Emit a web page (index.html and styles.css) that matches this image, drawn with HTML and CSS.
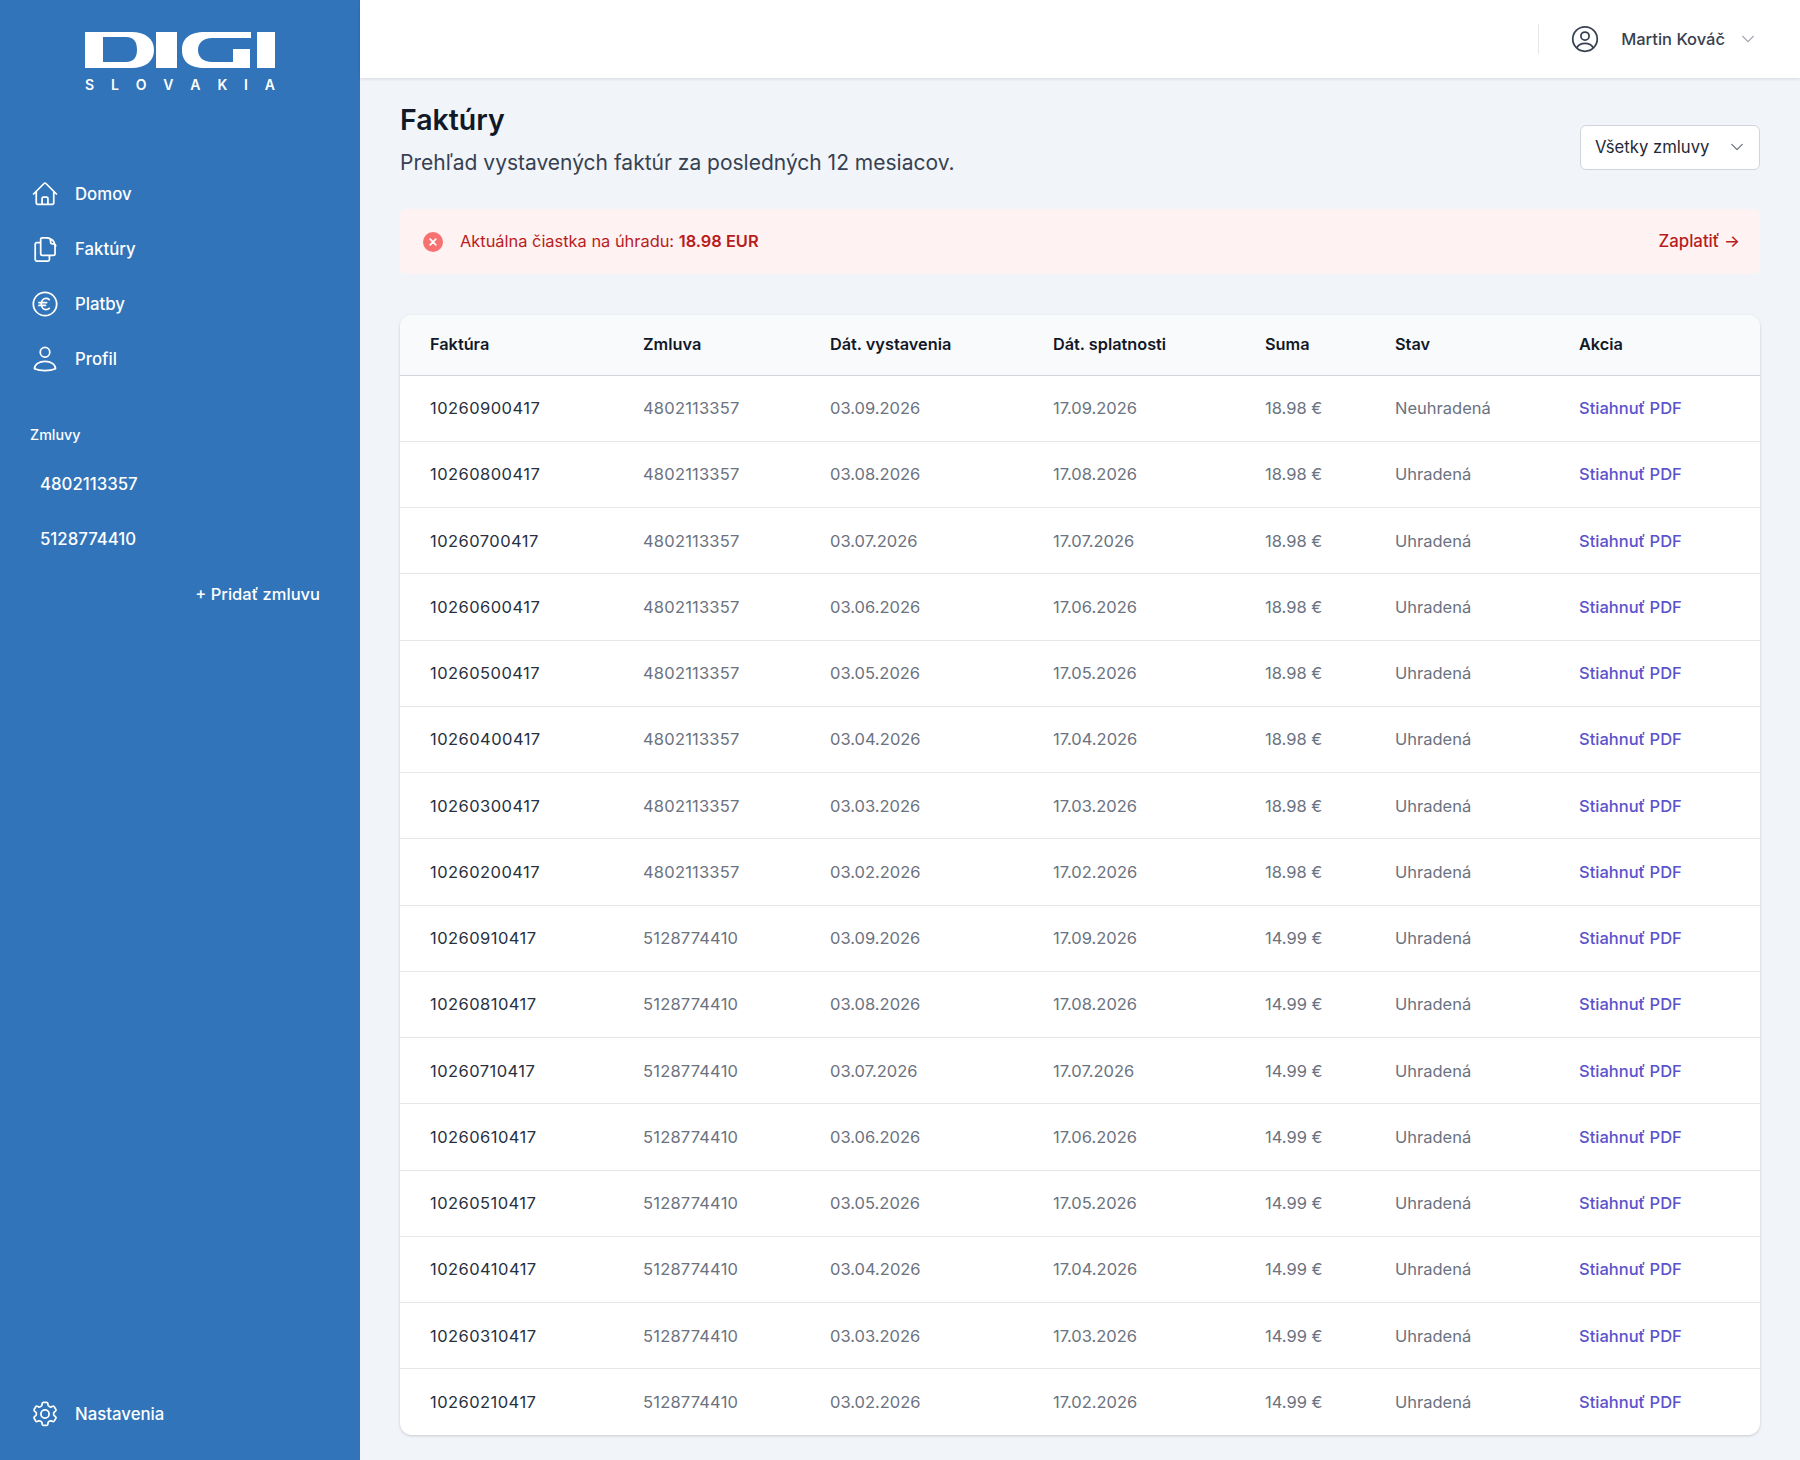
FILE: index.html
```html
<!DOCTYPE html>
<html lang="sk">
<head>
  <meta charset="UTF-8" />
  <title>Faktúry</title>
  <link rel="stylesheet" href="styles.css">
</head>
<body>
  <div class="layout">
    <!-- Sidebar -->
    <aside class="sidebar">
      <div class="logo">
        <svg class="logo-mark" viewBox="0 0 190 36" width="190" height="36" role="img" aria-label="DIGI">
          <path fill-rule="evenodd" d="M0 0H46C61 0 69 7 69 18C69 29 61 36 46 36H0ZM18 5V30H41C49 30 52 25 52 18C52 10 49 5 41 5Z" fill="#fff"/>
          <rect x="71" y="0" width="21" height="36" fill="#fff"/>
          <path d="M120 0H166V6H127C118 6 113 11 113 18C113 25 118 30 127 30H148V17H165V36H120C104 36 97 29 97 18C97 7 104 0 120 0Z" fill="#fff"/>
          <rect x="172" y="0" width="18" height="36" fill="#fff"/>
        </svg>
        <div class="logo-sub"><span>S</span><span>L</span><span>O</span><span>V</span><span>A</span><span>K</span><span>I</span><span>A</span></div>
      </div>

      <nav class="nav">
        <a class="nav-item" href="#">
          <svg class="nav-icon" viewBox="0 0 24 24"><path d="M2.2 12 11.200 3a1.100 1.100 0 0 1 1.600 0l9 9M4.500 9.800v9.900a1.100 1.100 0 0 0 1.100 1.100h12.800a1.100 1.100 0 0 0 1.100-1.100V9.800M9.500 20.800v-5.100c0-.6.500-1.100 1.100-1.100h2.800c.6 0 1.100.5 1.100 1.100v5.100"/></svg>
          Domov
        </a>
        <a class="nav-item" href="#">
          <svg class="nav-icon" viewBox="0 0 24 24"><path d="M8.300 6.600H4.900c-.7 0-1.300.6-1.300 1.300v13.200c0 .7.600 1.300 1.300 1.300h9.600c.7 0 1.300-.6 1.300-1.300v-3.700M8.300 3.400v12.700c0 .7.600 1.300 1.300 1.300h9.700c.7 0 1.300-.6 1.300-1.300V9.400c0-3.900-3.200-7-7-7H9.600c-.7 0-1.300.5-1.300 1ZM14 2.400c1.800 0 2.800 1.200 2.800 2.800v1c0 .7.600 1.300 1.300 1.300h.9c1.200 0 2.100 1 2.100 2"/></svg>
          Faktúry
        </a>
        <a class="nav-item" href="#">
          <svg class="nav-icon" viewBox="0 0 24 24"><circle cx="12" cy="12" r="10"/><path d="M15.600 8.200a4.100 4.100 0 0 0-2.700-1c-2.400 0-4.100 2.100-4.100 4.800s1.700 4.800 4.100 4.800c1 0 2-.4 2.700-1M6.800 10.800h6.600M6.800 13.200h5.600"/></svg>
          Platby
        </a>
        <a class="nav-item" href="#">
          <svg class="nav-icon" viewBox="0 0 24 24"><circle cx="12" cy="6.200" r="4.100"/><path d="M3 20.400c0-3.800 4-6.400 9-6.400s9 2.600 9 6.400c-2.500 1.100-5.600 1.600-9 1.600s-6.500-.5-9-1.600Z"/></svg>
          Profil
        </a>
      </nav>

      <div class="contracts-title">Zmluvy</div>
      <a class="contract" href="#">4802113357</a>
      <a class="contract" href="#">5128774410</a>
      <a class="add-contract" href="#">+ Pridať zmluvu</a>

      <a class="nav-item settings" href="#">
        <svg class="nav-icon" viewBox="0 0 24 24"><path d="M9.600 2.900c.1-.5.600-.9 1.100-.9h2.600c.5 0 1 .4 1.100.9l.2 1.500c.1.400.4.800.8 1l.7.4c.4.200.8.300 1.200.1l1.400-.5c.5-.2 1.100 0 1.300.5l1.300 2.200c.3.500.1 1-.3 1.400l-1.100.9c-.3.300-.5.700-.5 1.100v.8c0 .4.200.8.500 1.100l1.100.9c.4.300.6.900.3 1.400l-1.300 2.200c-.3.500-.8.700-1.300.5l-1.400-.5c-.4-.1-.8-.1-1.200.1l-.7.4c-.4.200-.7.600-.8 1l-.2 1.500c-.1.500-.6.900-1.100.9h-2.600c-.5 0-1-.4-1.100-.9l-.2-1.500c-.1-.4-.4-.8-.8-1l-.7-.4c-.4-.2-.8-.3-1.200-.1l-1.400.5c-.5.200-1.100 0-1.300-.5l-1.300-2.200c-.3-.5-.1-1.100.3-1.400l1.100-.9c.3-.3.500-.7.500-1.100v-.8c0-.4-.2-.8-.5-1.100l-1.100-.9c-.4-.4-.6-.9-.3-1.400l1.300-2.200c.3-.5.800-.7 1.300-.5l1.400.5c.4.200.8.100 1.200-.1l.7-.4c.4-.2.700-.6.800-1Z"/><circle cx="12" cy="12" r="3.500"/></svg>
        Nastavenia
      </a>
    </aside>

    <div class="main">
      <!-- Top bar -->
      <header class="topbar">
        <span class="topbar-divider"></span>
        <svg class="user-icon" viewBox="0 0 24 24"><circle cx="12" cy="12" r="10.500"/><circle cx="12" cy="9.500" r="3.500"/><path d="M5 19.500c1.300-2.600 3.900-3.800 7-3.800s5.700 1.200 7 3.800"/></svg>
        <span class="user-name">Martin Kováč</span>
        <svg class="chevron chevron-light" viewBox="0 0 16 16"><path d="m2 5 6 6 6-6"/></svg>
      </header>

      <main class="content">
        <div class="page-head">
          <div>
            <h1>Faktúry</h1>
            <p class="lead">Prehľad vystavených faktúr za posledných 12 mesiacov.</p>
          </div>
          <div class="select">
            Všetky zmluvy
            <svg class="chevron" viewBox="0 0 16 16"><path d="m2 5 6 6 6-6"/></svg>
          </div>
        </div>

        <div class="alert">
          <svg class="alert-icon" viewBox="0 0 20 20"><circle cx="10" cy="10" r="10" fill="#f87171"/><path d="m7.200 7.200 5.600 5.600m0-5.600-5.600 5.600" stroke="#fff" stroke-width="1.700" stroke-linecap="round"/></svg>
          <span class="alert-text">Aktuálna čiastka na úhradu: <strong>18.98 EUR</strong></span>
          <a class="alert-link" href="#">Zaplatiť →</a>
        </div>

        <div class="table-card">
          <table>
            <thead>
              <tr>
                <th>Faktúra</th>
                <th>Zmluva</th>
                <th>Dát. vystavenia</th>
                <th>Dát. splatnosti</th>
                <th>Suma</th>
                <th>Stav</th>
                <th>Akcia</th>
              </tr>
            </thead>
            <tbody id="rows"></tbody>
          </table>
        </div>
      </main>
    </div>
  </div>

  <script src="rows.js"></script>
</body>
</html>
```

FILE: styles.css
```css
* {
  box-sizing: border-box;
}

body {
  margin: 0;
  font-family: 'Inter', sans-serif;
  background: #f1f5f9;
  color: #111827;
}

a {
  text-decoration: none;
}

.layout {
  display: flex;
  min-height: 1460px;
}

/* Sidebar */
.sidebar {
  width: 360px;
  flex-shrink: 0;
  background: #3174b9;
  color: #fff;
  display: flex;
  flex-direction: column;
  padding: 32px 40px 0 30px;
}

.logo {
  width: 190px;
  margin-left: 55px;
}

.logo-mark {
  display: block;
}

.logo-sub {
  display: flex;
  justify-content: space-between;
  margin-top: 10px;
  font-size: 14px;
  line-height: 14px;
  font-weight: 600;
}

.nav {
  margin-top: 74px;
  display: flex;
  flex-direction: column;
}

.nav-item {
  display: flex;
  align-items: center;
  gap: 16px;
  height: 55px;
  color: #fff;
  font-size: 16.8px;
  font-weight: 500;
}

.nav-icon {
  width: 28px;
  height: 28px;
  margin-left: 1px;
  fill: none;
  stroke: #fff;
  stroke-width: 1.5;
  stroke-linecap: round;
  stroke-linejoin: round;
}

.contracts-title {
  margin-top: 39px;
  font-size: 14.3px;
  line-height: 20px;
  font-weight: 500;
}

.contract {
  display: block;
  padding-left: 10px;
  height: 55px;
  line-height: 55px;
  color: #fff;
  font-size: 16.8px;
  font-weight: 500;
}

.contract:first-of-type {
  margin-top: 12px;
}

.add-contract {
  height: 55px;
  line-height: 55px;
  text-align: right;
  color: #fff;
  font-size: 16.5px;
  font-weight: 500;
}

.settings {
  margin-top: auto;
  margin-bottom: 19px;
}

/* Top bar */
.main {
  flex: 1;
  min-width: 0;
}

.topbar {
  height: 78px;
  background: #fff;
  box-shadow: 0 1px 3px rgba(0, 0, 0, 0.12);
  display: flex;
  align-items: center;
  justify-content: flex-end;
  padding-right: 45px;
}

.topbar-divider {
  width: 1px;
  height: 30px;
  background: #e5e7eb;
  margin-right: 32px;
}

.user-icon {
  width: 28px;
  height: 28px;
  fill: none;
  stroke: #374151;
  stroke-width: 1.5;
  margin-right: 22px;
}

.user-name {
  font-size: 16.5px;
  font-weight: 500;
  color: #374151;
  margin-right: 16px;
}

.chevron {
  width: 14px;
  height: 14px;
  fill: none;
  stroke: #6b7280;
  stroke-width: 1.5;
  stroke-linecap: round;
  stroke-linejoin: round;
}

.chevron-light {
  stroke: #9ca3af;
}

/* Content */
.content {
  padding: 24px 40px 25px;
}

.page-head {
  display: flex;
  justify-content: space-between;
  align-items: flex-start;
}

h1 {
  margin: 0;
  font-size: 28.5px;
  line-height: 36px;
  font-weight: 600;
  color: #111827;
}

.lead {
  margin: 11px 0 0;
  font-size: 21px;
  line-height: 28px;
  color: #374151;
}

.select {
  width: 180px;
  height: 45px;
  margin-top: 23px;
  background: #fff;
  border: 1px solid #d1d5db;
  border-radius: 6px;
  display: flex;
  align-items: center;
  justify-content: space-between;
  padding: 0 15px 2px 14px;
  font-size: 16.7px;
  color: #1f2937;
}

.alert {
  margin-top: 32px;
  height: 65px;
  background: #fef2f2;
  border-radius: 6px;
  display: flex;
  align-items: center;
  padding: 0 20px 0 23px;
}

.alert-icon {
  width: 20px;
  height: 20px;
  flex-shrink: 0;
  margin-right: 17px;
}

.alert-text {
  flex: 1;
  font-size: 16.4px;
  color: #b91c1c;
  padding-bottom: 1px;
}

.alert-text strong {
  font-weight: 600;
}

.alert-link {
  color: #b91c1c;
  font-size: 16.8px;
  font-weight: 500;
  padding-bottom: 1px;
}

/* Table */
.table-card {
  margin-top: 41px;
  background: #fff;
  border-radius: 12px;
  overflow: hidden;
  box-shadow: 0 1px 3px rgba(0, 0, 0, 0.18);
}

table {
  width: 100%;
  border-collapse: collapse;
  table-layout: fixed;
}

th {
  height: 60px;
  text-align: left;
  padding: 0 0 2px 30px;
  font-size: 16.3px;
  font-weight: 600;
  color: #111827;
  background: #f9fafb;
  border-bottom: 1px solid #d1d5db;
}

td {
  height: 66.25px;
  padding: 0 0 0 30px;
  font-size: 16.5px;
  color: #6b7280;
  border-top: 1px solid #e5e7eb;
}

tbody tr:first-child td {
  border-top: 0;
}

th:nth-child(1) { width: 213px; }
th:nth-child(2) { width: 187px; }
th:nth-child(3) { width: 223px; }
th:nth-child(4) { width: 212px; }
th:nth-child(5) { width: 130px; }
th:nth-child(6) { width: 184px; }

td.invoice {
  color: #27303f;
  letter-spacing: 0.45px;
}

td.contract-no {
  letter-spacing: 0.2px;
}

td a {
  color: #5b52cc;
  font-weight: 500;
}
```

FILE: rows.js
```js
const rows = document.getElementById("rows");
const months = ["09", "08", "07", "06", "05", "04", "03", "02"];

function addRows(contract, digit, sum) {
  months.forEach(m => {
    const tr = document.createElement("tr");
    const status = contract === "4802113357" && m === "09" ? "Neuhradená" : "Uhradená";
    const cells = [
      "10260" + Number(m) + digit + "0417",
      contract,
      "03." + m + ".2026",
      "17." + m + ".2026",
      sum + " €",
      status
    ];
    cells.forEach((c, i) => {
      const td = document.createElement("td");
      td.textContent = c;
      if (i === 0) td.className = "invoice";
      if (i === 1) td.className = "contract-no";
      tr.appendChild(td);
    });
    const action = document.createElement("td");
    const link = document.createElement("a");
    link.href = "#";
    link.textContent = "Stiahnuť PDF";
    action.appendChild(link);
    tr.appendChild(action);
    rows.appendChild(tr);
  });
}

addRows("4802113357", "0", "18.98");
addRows("5128774410", "1", "14.99");
```
